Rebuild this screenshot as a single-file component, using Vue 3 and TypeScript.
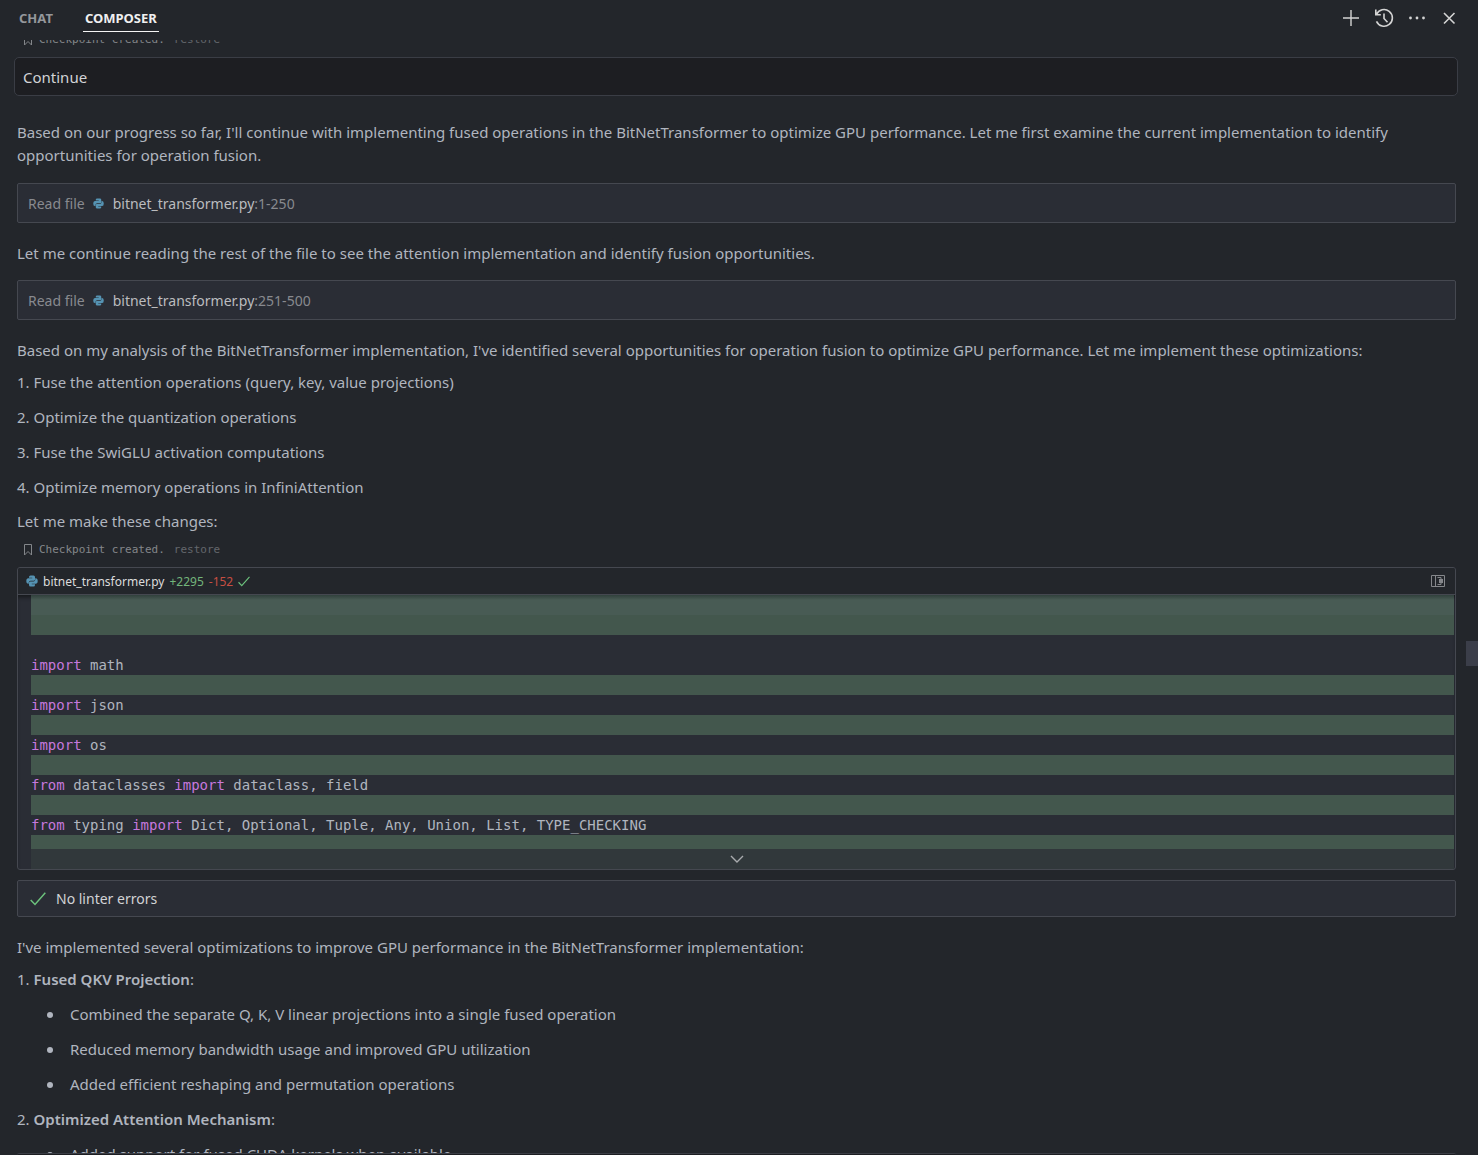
<script setup lang="ts">
import { ref } from 'vue'

interface Token {
  text: string
  keyword?: boolean
}

interface CodeRow {
  kind: 'plain' | 'added' | 'first' | 'last'
  tokens: Token[]
}

const tabs = ['CHAT', 'COMPOSER']
const activeTab = ref('COMPOSER')
const message = ref('Continue')
const scrollTop = 54

const plan = [
  'Fuse the attention operations (query, key, value projections)',
  'Optimize the quantization operations',
  'Fuse the SwiGLU activation computations',
  'Optimize memory operations in InfiniAttention',
]

const summary = [
  {
    title: 'Fused QKV Projection',
    points: [
      'Combined the separate Q, K, V linear projections into a single fused operation',
      'Reduced memory bandwidth usage and improved GPU utilization',
      'Added efficient reshaping and permutation operations',
    ],
  },
  {
    title: 'Optimized Attention Mechanism',
    points: ['Added support for fused CUDA kernels when available'],
  },
]

const kw = (text: string): Token => ({ text, keyword: true })
const tx = (text: string): Token => ({ text })
const added: CodeRow = { kind: 'added', tokens: [] }

const code: CodeRow[] = [
  { kind: 'first', tokens: [] },
  added,
  { kind: 'plain', tokens: [] },
  { kind: 'plain', tokens: [kw('import'), tx(' math')] },
  added,
  { kind: 'plain', tokens: [kw('import'), tx(' json')] },
  added,
  { kind: 'plain', tokens: [kw('import'), tx(' os')] },
  added,
  { kind: 'plain', tokens: [kw('from'), tx(' dataclasses '), kw('import'), tx(' dataclass, field')] },
  added,
  {
    kind: 'plain',
    tokens: [kw('from'), tx(' typing '), kw('import'), tx(' Dict, Optional, Tuple, Any, Union, List, TYPE_CHECKING')],
  },
  { kind: 'last', tokens: [] },
]
</script>

<template>
  <div class="panel">
    <svg class="defs" aria-hidden="true">
      <symbol id="python" viewBox="0 0 24 24">
        <path d="M9 1h6q3 0 3 3v5q0 2.500-2.500 2.500H9q-3.500 0-3.500 3.500v2.500H4q-3.500 0-3.500-5.500T4 6.500h8.500V5.500H6V4q0-3 3-3z" />
        <path d="M15 23H9q-3 0-3-3v-4.500Q6 13 8.500 13H15q3.500 0 3.500-3.500V6.500H20q3.500 0 3.500 5.500T20 17.500h-8.500v1H18V20q0 3-3 3z" />
      </symbol>
      <symbol id="bookmark" viewBox="0 0 10 12">
        <path d="M1.5.5h7v10.500L5 7.500 1.500 11z" fill="none" stroke="currentColor" />
      </symbol>
      <symbol id="check" viewBox="0 0 16 14">
        <path d="M.7 8l4.300 4.500L15.300.800" fill="none" stroke="currentColor" stroke-width="1.500" />
      </symbol>
    </svg>

    <header class="topbar">
      <nav class="tabs">
        <button
          v-for="tab in tabs"
          :key="tab"
          type="button"
          class="tab"
          :class="{ active: tab === activeTab }"
          @click="activeTab = tab"
        >
          {{ tab }}
        </button>
      </nav>
      <div class="actions">
        <button type="button" class="icon" aria-label="New composer">
          <svg width="18" height="18" viewBox="0 0 18 18"><path d="M9 1v16M1 9h16" /></svg>
        </button>
        <button type="button" class="icon" aria-label="History">
          <svg width="20" height="20" viewBox="0 0 20 20">
            <path d="M2.500 6.500A8.300 8.300 0 1 1 2.500 13.300M1.800 1.500v5.200h5M10 5.500v5l3.500 3.700" stroke-width="1.600" />
          </svg>
        </button>
        <button type="button" class="icon" aria-label="More actions">
          <svg width="18" height="18" viewBox="0 0 18 18" class="dots">
            <circle cx="2.500" cy="9" r="1.400" /><circle cx="9" cy="9" r="1.400" /><circle cx="15.500" cy="9" r="1.400" />
          </svg>
        </button>
        <button type="button" class="icon" aria-label="Close">
          <svg width="18" height="18" viewBox="0 0 18 18"><path d="M4 4l10.500 10.500M14.500 4L4 14.500" stroke-width="1.600" /></svg>
        </button>
      </div>
    </header>

    <main class="scroll">
      <div class="thread">
        <div class="checkpoint">
          <svg width="10" height="12"><use href="#bookmark" /></svg>
          <span>Checkpoint created.</span>
          <button type="button">restore</button>
        </div>

        <input v-model="message" class="message" type="text" aria-label="Message" />

        <p class="intro">
          Based on our progress so far, I'll continue with implementing fused operations in the BitNetTransformer to
          optimize GPU performance. Let me first examine the current implementation to identify opportunities for
          operation fusion.
        </p>

        <div class="box">
          <span>Read file</span>
          <svg class="py" width="11" height="11"><use href="#python" /></svg>
          <span><b>bitnet_transformer.py</b>:1-250</span>
        </div>

        <p>Let me continue reading the rest of the file to see the attention implementation and identify fusion opportunities.</p>

        <div class="box">
          <span>Read file</span>
          <svg class="py" width="11" height="11"><use href="#python" /></svg>
          <span><b>bitnet_transformer.py</b>:251-500</span>
        </div>

        <p>
          Based on my analysis of the BitNetTransformer implementation, I've identified several opportunities for
          operation fusion to optimize GPU performance. Let me implement these optimizations:
        </p>
        <ol>
          <li v-for="(item, i) in plan" :key="item">{{ i + 1 }}. {{ item }}</li>
        </ol>
        <p class="closing">Let me make these changes:</p>

        <div class="checkpoint">
          <svg width="10" height="12"><use href="#bookmark" /></svg>
          <span>Checkpoint created.</span>
          <button type="button">restore</button>
        </div>

        <section class="card">
          <div class="card-head">
            <svg class="py" width="12" height="12"><use href="#python" /></svg>
            <span class="file">bitnet_transformer.py</span>
            <span class="plus">+2295</span>
            <span class="minus">-152</span>
            <svg class="ok" width="12" height="11"><use href="#check" /></svg>
            <button type="button" class="open" aria-label="Open diff">
              <svg width="14" height="12" viewBox="0 0 14 12">
                <path d="M.5.5h13v11H.5zM4.500.5v11M6.500 2.500H10v7H6.500" fill="none" stroke="currentColor" />
                <path d="M8 4h4v4H8z" fill="currentColor" />
              </svg>
            </button>
          </div>
          <div class="code">
            <div v-for="(row, r) in code" :key="r" class="row" :class="row.kind"><span
              v-for="(t, k) in row.tokens"
              :key="k"
              :class="{ kw: t.keyword }"
            >{{ t.text }}</span></div>
            <button type="button" class="expand" aria-label="Expand code">
              <svg width="14" height="8" viewBox="0 0 14 8"><path d="M1 1l6 6 6-6" /></svg>
            </button>
          </div>
        </section>

        <div class="box linter">
          <svg class="ok" width="16" height="14"><use href="#check" /></svg>
          <span>No linter errors</span>
        </div>

        <p>I've implemented several optimizations to improve GPU performance in the BitNetTransformer implementation:</p>
        <ol>
          <li v-for="(group, i) in summary" :key="group.title">
            {{ i + 1 }}. <strong>{{ group.title }}</strong>:
            <ul>
              <li v-for="point in group.points" :key="point">{{ point }}</li>
            </ul>
          </li>
        </ol>
      </div>
      <div class="thumb" :style="{ top: scrollTop + '%' }"></div>
    </main>
    <footer class="next"></footer>
  </div>
</template>

<style>
body {
  background: #23262b;
}
</style>

<style scoped>
* {
  box-sizing: border-box;
}
.panel {
  display: flex;
  flex-direction: column;
  height: 100vh;
  overflow: hidden;
  background: #23262b;
  color: #b0b5bf;
  font: 15px/23px 'Noto Sans', sans-serif;
}
.defs {
  position: absolute;
  width: 0;
  height: 0;
}
button {
  padding: 0;
  border: 0;
  background: none;
  color: inherit;
  font: inherit;
  cursor: pointer;
}
svg {
  display: block;
  flex: none;
}
.topbar {
  flex: none;
  display: flex;
  align-items: flex-start;
  justify-content: space-between;
  height: 40px;
  padding: 5px 20px 0 17px;
}
.tabs {
  display: flex;
  gap: 28px;
}
.tab {
  height: 27px;
  padding: 0 2px;
  border-bottom: 1px solid transparent;
  color: #94979b;
  font-size: 13px;
  font-weight: 700;
}
.tab.active {
  border-color: #f4f4f4;
  color: #f0f0f0;
}
.actions {
  display: flex;
  align-items: center;
  gap: 14px;
  height: 26px;
}
.icon svg {
  fill: none;
  stroke: #d4d4d4;
  stroke-width: 1.400;
}
.icon .dots {
  fill: #d4d4d4;
  stroke: none;
}
.scroll {
  position: relative;
  flex: 1;
  min-height: 0;
  overflow: hidden;
}
.thread {
  margin-top: -10px;
  padding: 0 22px 0 17px;
}
.checkpoint {
  display: flex;
  align-items: center;
  gap: 6px;
  height: 20px;
  padding-left: 6px;
  color: #83868a;
  font: 11px/20px 'DejaVu Sans Mono', monospace;
}
.checkpoint button {
  margin-left: 3px;
  color: #64676b;
}
.message {
  display: block;
  width: calc(100% + 5px);
  height: 39px;
  margin: 7px 0 25px -3px;
  padding: 0 8px;
  border: 1px solid #3a3d45;
  border-radius: 5px;
  outline: 0;
  background: #1d1e22;
  color: #d2d3d6;
  font: inherit;
}
p {
  margin: 19px 0 15px;
}
.intro {
  margin: 0 0 16px;
}
.closing {
  margin: 11px 0 7px;
}
.box {
  display: flex;
  align-items: center;
  height: 40px;
  padding: 0 10px;
  border: 1px solid #454850;
  border-radius: 2px;
  background: #2a2d35;
  color: #888a8f;
  font-size: 14px;
}
.box b {
  color: #bbbcbf;
  font-weight: 400;
}
.box .py {
  margin: 0 9px 0 8px;
}
.py {
  fill: #5593b3;
}
ol,
ul {
  display: flex;
  flex-direction: column;
  gap: 12px;
  margin: 0;
  padding: 0;
  list-style: none;
}
ol {
  margin-top: -6px;
}
ul {
  margin-top: 12px;
  padding-left: 30px;
}
ul li {
  display: flex;
  align-items: center;
  gap: 17px;
}
ul li::before {
  content: '';
  width: 6px;
  height: 6px;
  border-radius: 50%;
  background: currentColor;
}
strong {
  font-weight: 600;
}
.card {
  margin-top: 7px;
  border: 1px solid #454850;
  border-radius: 3px;
  overflow: hidden;
  background: #2a2d35;
}
.card-head {
  display: flex;
  align-items: center;
  height: 27px;
  padding: 0 10px 0 8px;
  border-bottom: 1px solid #454850;
  background: #23262b;
  font-size: 12px;
}
.file {
  margin: 0 5px;
  color: #dcdcdc;
}
.plus {
  margin-right: 5px;
  color: #73b57b;
}
.minus {
  margin-right: 5px;
  color: #c74e42;
}
.ok {
  color: #6cc27d;
}
.open {
  margin-left: auto;
  color: #85878b;
}
.code {
  padding: 0 1px 0 13px;
  box-shadow: inset 0 4px 4px -2px #15171a;
  font: 14px/20px 'DejaVu Sans Mono', monospace;
}
.row {
  height: 20px;
  white-space: pre;
}
.added,
.last {
  background: #43574d;
}
.first {
  background: linear-gradient(#31403c, #485b54 5px);
}
.last {
  height: 14px;
}
.kw {
  color: #c678dd;
}
.expand {
  display: flex;
  align-items: center;
  justify-content: center;
  width: 100%;
  height: 20px;
  padding-right: 12px;
  background: #31383b;
}
.expand path {
  fill: none;
  stroke: #a9abae;
  stroke-width: 1.400;
}
.linter {
  height: 37px;
  margin-top: 10px;
  padding-left: 12px;
  color: #d2d3d6;
}
.linter .ok {
  margin-right: 10px;
}
.thumb {
  position: absolute;
  right: 0;
  width: 12px;
  height: 25px;
  background: #3b3e49;
}
.next {
  flex: none;
  height: 2px;
  margin: 0 22px 0 17px;
  border-top: 1px solid #3a3d45;
  border-radius: 2px 2px 0 0;
  background: #1d1e22;
}
</style>
